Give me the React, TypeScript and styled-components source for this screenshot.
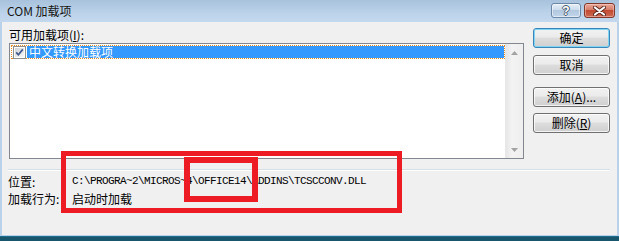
import React from "react"
import styled, { createGlobalStyle } from "styled-components"

const GlobalStyle = createGlobalStyle`
  html, body {
    margin: 0;
    padding: 0;
    background: #17566c;
  }
  body {
    font-family: "Noto Sans CJK SC", "Liberation Sans", sans-serif;
    font-size: 12px;
    color: #000;
  }
`

const CJK = `"Noto Sans CJK SC", "Liberation Sans", sans-serif`

const App: React.FC = () => {
  return (
    <>
      <GlobalStyle />
      <Window>
        <TitleBar>
          <TitleText>COM 加载项</TitleText>
          <CaptionButtons>
            <HelpButton>?</HelpButton>
            <CloseButton>
              <svg width="13" height="10" viewBox="0 0 13 10">
                <path d="M2 1.5 L11 8.5 M11 1.5 L2 8.5" stroke="#5a2a22" strokeWidth="4" strokeLinecap="round" />
                <path d="M2 1.5 L11 8.5 M11 1.5 L2 8.5" stroke="#fff" strokeWidth="2.2" strokeLinecap="round" />
              </svg>
            </CloseButton>
          </CaptionButtons>
        </TitleBar>
        <Body>
          <TopRow>
            <ListColumn>
              <FieldLabel>
                可用加载项(<u>I</u>):
              </FieldLabel>
              <ListBox>
                <Items>
                  <Item>
                    <CheckBox>
                      <svg width="13" height="13" viewBox="0 0 13 13">
                        <defs>
                          <linearGradient id="cbg" x1="0" y1="0" x2="1" y2="1">
                            <stop offset="0" stopColor="#cfd3d8" />
                            <stop offset="1" stopColor="#f7f7f7" />
                          </linearGradient>
                        </defs>
                        <rect x="0.5" y="0.5" width="12" height="12" fill="#fff" stroke="#8e8f8f" />
                        <rect x="2" y="2" width="9" height="9" fill="url(#cbg)" />
                        <path d="M3.2 6.4 L5.4 8.8 L9.8 3.4" fill="none" stroke="#40598a" strokeWidth="1.7" />
                      </svg>
                    </CheckBox>
                    <ItemText>中文转换加载项</ItemText>
                  </Item>
                </Items>
                <ScrollBar>
                  <ScrollArrow>
                    <svg width="7" height="4" viewBox="0 0 7 4">
                      <path d="M0 4 L3.5 0 L7 4 Z" fill="#a3a3a3" />
                    </svg>
                  </ScrollArrow>
                  <ScrollTrack />
                  <ScrollArrow>
                    <svg width="7" height="4" viewBox="0 0 7 4">
                      <path d="M0 0 L7 0 L3.5 4 Z" fill="#a3a3a3" />
                    </svg>
                  </ScrollArrow>
                </ScrollBar>
              </ListBox>
            </ListColumn>
            <ButtonColumn>
              <DialogButton $default $gap={0}>确定</DialogButton>
              <DialogButton $gap={7}>取消</DialogButton>
              <DialogButton $gap={12}>
                添加(<u>A</u>)...
              </DialogButton>
              <DialogButton $gap={6}>
                删除(<u>R</u>)
              </DialogButton>
            </ButtonColumn>
          </TopRow>
          <Separator />
          <InfoGrid>
            <InfoLabel>位置:</InfoLabel>
            <PathValue>C:\PROGRA~2\MICROS~4\OFFICE14\ADDINS\TCSCCONV.DLL</PathValue>
            <InfoLabel>加载行为:</InfoLabel>
            <InfoValue>启动时加载</InfoValue>
          </InfoGrid>
        </Body>
        <Highlight $left={61} $top={151} $width={341} $height={62} $stroke={5} />
        <Highlight $left={184} $top={157} $width={74} $height={45} $stroke={6} />
      </Window>
    </>
  )
}

const Window = styled.div`
  position: relative;
  width: 619px;
  height: 237px;
  box-sizing: border-box;
  display: flex;
  flex-direction: column;
  background: #b9d2ea;
  border-bottom: 1px solid #1f6d8a;
`

const TitleBar = styled.div`
  height: 22px;
  flex: none;
  display: flex;
  align-items: center;
  justify-content: space-between;
  padding: 0 4px 0 7px;
  background: linear-gradient(#a8c2dd, #bcd3ea 60%, #c3d8ed);
`

const TitleText = styled.div`
  font-family: ${CJK};
  font-size: 12px;
  color: #151515;
  line-height: 22px;
  margin-top: -1px;
`

const CaptionButtons = styled.div`
  display: flex;
  gap: 3px;
  align-items: center;
  margin-top: -1px;
`

const CaptionButton = styled.div`
  height: 15px;
  box-sizing: border-box;
  border-radius: 3px;
  display: flex;
  align-items: center;
  justify-content: center;
`

const HelpButton = styled(CaptionButton)`
  width: 30px;
  border: 1px solid #6b87a6;
  background: linear-gradient(#e4eef8, #ccdcec 45%, #b2c8df 50%, #c2d6ea);
  box-shadow: inset 0 0 0 1px rgba(255, 255, 255, 0.5);
  font-family: "Liberation Sans", sans-serif;
  font-weight: bold;
  font-size: 12px;
  color: #fff;
  text-shadow: 1px 0 #4a5a6e, -1px 0 #4a5a6e, 0 1px #4a5a6e, 0 -1px #4a5a6e;
`

const CloseButton = styled(CaptionButton)`
  width: 31px;
  border: 1px solid #7e382c;
  background: linear-gradient(#eaa898, #d67d69 45%, #c24a31 50%, #cd6a52);
  box-shadow: inset 0 0 0 1px rgba(255, 220, 210, 0.45);
`

const Body = styled.div`
  flex: 1;
  margin: 0 2px 1px 2px;
  padding: 5px 7px 0 7px;
  background: #f0f0f0;
  display: flex;
  flex-direction: column;
`

const TopRow = styled.div`
  display: flex;
  gap: 9px;
`

const ListColumn = styled.div`
  width: 515px;
  display: flex;
  flex-direction: column;
`

const FieldLabel = styled.div`
  font-family: ${CJK};
  font-size: 12px;
  line-height: 16px;
  height: 16px;
`

const ListBox = styled.div`
  height: 116px;
  box-sizing: border-box;
  border: 1px solid #828790;
  background: #fff;
  display: flex;
`

const Items = styled.div`
  flex: 1;
  padding: 1px 0 0 1px;
`

const Item = styled.div`
  height: 14px;
  box-sizing: border-box;
  border: 1px dotted #e58a1f;
  display: flex;
  align-items: center;
`

const CheckBox = styled.div`
  width: 14px;
  height: 12px;
  padding-left: 1px;
  display: flex;
  align-items: center;
  svg {
    display: block;
  }
`

const ItemText = styled.div`
  flex: 1;
  height: 12px;
  background: #3399ff;
  color: #fff;
  font-family: ${CJK};
  font-size: 12px;
  line-height: 12px;
  padding-left: 2px;
`

const ScrollBar = styled.div`
  width: 17px;
  display: flex;
  flex-direction: column;
  background: linear-gradient(to right, #e6e6e6, #f3f3f3 35%, #eeeeee);
  border-left: 1px solid #e8e8e8;
`

const ScrollArrow = styled.div`
  height: 17px;
  display: flex;
  align-items: center;
  justify-content: center;
  svg {
    display: block;
  }
`

const ScrollTrack = styled.div`
  flex: 1;
`

const ButtonColumn = styled.div`
  width: 77px;
  padding-top: 1px;
  display: flex;
  flex-direction: column;
`

const DialogButton = styled.div<{ $default?: boolean; $gap: number }>`
  height: 20px;
  margin-top: ${p => p.$gap}px;
  box-sizing: border-box;
  border: 1px solid ${p => (p.$default ? "#3a86b8" : "#707070")};
  border-radius: 3px;
  background: linear-gradient(#f2f2f2, #ebebeb 45%, #dddddd 50%, #cfcfcf);
  box-shadow: inset 0 0 0 1px ${p => (p.$default ? "#7fd6f4" : "rgba(255,255,255,0.75)")};
  display: flex;
  align-items: center;
  justify-content: center;
  font-family: ${CJK};
  font-size: 12px;
  line-height: 18px;
  color: #000;
`

const Separator = styled.div`
  height: 1px;
  margin: 10px 0 0 -1px;
  background: #d5dfe5;
  border-bottom: 1px solid #fff;
`

const InfoGrid = styled.div`
  margin-top: 2px;
  margin-left: -1px;
  display: grid;
  grid-template-columns: 64px 1fr;
  grid-auto-rows: 17px;
  align-items: center;
`

const InfoLabel = styled.div`
  font-family: ${CJK};
  font-size: 12px;
  line-height: 17px;
`

const InfoValue = styled.div`
  font-family: ${CJK};
  font-size: 12px;
  line-height: 17px;
`

const PathValue = styled.div`
  font-family: "Liberation Mono", monospace;
  font-size: 11px;
  letter-spacing: -0.6px;
  line-height: 17px;
  white-space: nowrap;
`

const Highlight = styled.div<{ $left: number; $top: number; $width: number; $height: number; $stroke: number }>`
  position: absolute;
  left: ${p => p.$left}px;
  top: ${p => p.$top}px;
  width: ${p => p.$width}px;
  height: ${p => p.$height}px;
  box-sizing: border-box;
  border: ${p => p.$stroke}px solid #ed1c24;
  pointer-events: none;
`

export default App
